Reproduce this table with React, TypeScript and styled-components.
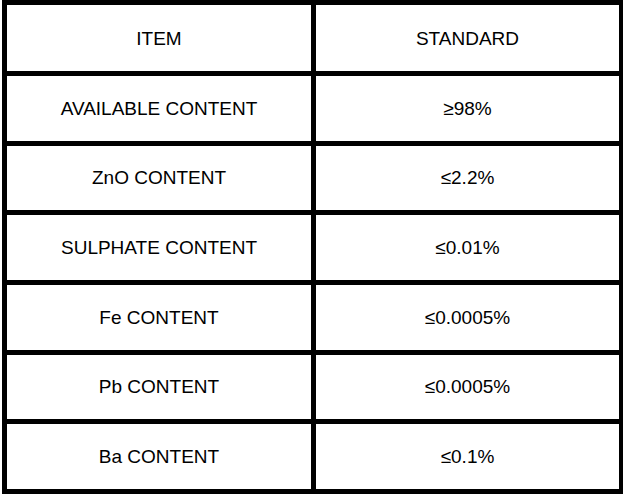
import React from "react";
import styled, { createGlobalStyle } from "styled-components";

const GlobalStyle = createGlobalStyle`
    html, body {
        margin: 0;
        padding: 0;
        background: #fff;
    }
    body {
        font-family: "Liberation Sans", Arial, sans-serif;
        color: #000;
    }
`;

const Page = styled.div`
    padding-left: 2px;
`;

const Grid = styled.div`
    display: grid;
    width: 621px;
    box-sizing: border-box;
    grid-template-columns: 304px 303px;
    grid-template-rows: 66px;
    grid-auto-rows: 64.67px;
    gap: 5px;
    padding: 5px 4px 5px 5px;
    background: #000;
`;

const Cell = styled.div`
    background: #fff;
    display: flex;
    align-items: center;
    justify-content: center;
    font-size: 19px;
    line-height: 1;
`;

const rows: [string, string][] = [
    ["AVAILABLE CONTENT", "≥98%"],
    ["ZnO CONTENT", "≤2.2%"],
    ["SULPHATE CONTENT", "≤0.01%"],
    ["Fe CONTENT", "≤0.0005%"],
    ["Pb CONTENT", "≤0.0005%"],
    ["Ba CONTENT", "≤0.1%"],
];

export default function App() {
    return (
        <>
            <GlobalStyle />
            <Page>
                <Grid>
                    <Cell>ITEM</Cell>
                    <Cell>STANDARD</Cell>
                    {rows.map(([item, standard]) => (
                        <React.Fragment key={item}>
                            <Cell>{item}</Cell>
                            <Cell>{standard}</Cell>
                        </React.Fragment>
                    ))}
                </Grid>
            </Page>
        </>
    );
}
